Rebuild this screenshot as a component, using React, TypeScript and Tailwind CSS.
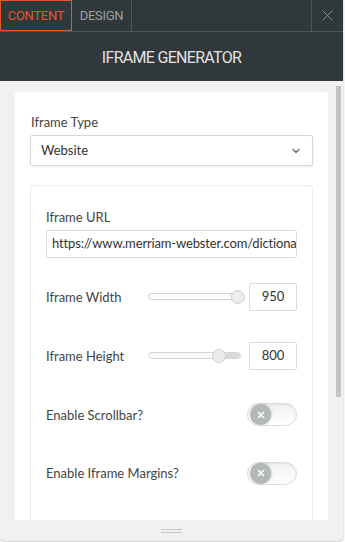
import { ChevronDown, X } from 'lucide-react';

function Slider({ pct, filled }: { pct: number; filled?: boolean }) {
  return (
    <div className="relative w-[93px] h-[14px] flex items-center">
      <div className="w-full h-[7px] rounded-full border border-[#d4d4d4] bg-[#fafafa] overflow-hidden">
        {filled && <div className="ml-auto h-full bg-[#d9d9d9]" style={{ width: `${100 - pct}%` }} />}
      </div>
      <div
        className="absolute top-0 w-[14px] h-[14px] -ml-[7px] rounded-full border border-[#cfcfcf] bg-[#ececec]"
        style={{ left: `${pct}%` }}
      />
    </div>
  );
}

function Toggle() {
  return (
    <div className="w-[50px] h-[23px] rounded-full border border-[#dcdcdc] bg-gradient-to-b from-[#f0f0f0] to-white flex items-center px-[2px] shadow-[inset_0_1px_2px_rgba(0,0,0,0.06)]">
      <div className="w-[21px] h-[21px] rounded-full bg-[#b3b8b8] flex items-center justify-center shadow-[1px_0_2px_rgba(0,0,0,0.15)]">
        <X size={10} strokeWidth={4} className="text-white" />
      </div>
    </div>
  );
}

function NumberBox({ value }: { value: string }) {
  return (
    <div className="w-[48px] h-[28px] border border-[#dcdcdc] rounded-[2px] flex items-center justify-center text-[13px] text-[#333]">
      {value}
    </div>
  );
}

export default function App() {
  const label = 'text-[13px] leading-[16px] text-[#444]';
  return (
    <div className="w-[345px] h-[542px] bg-white overflow-hidden font-['Lato','Open_Sans',sans-serif]">
      <div className="w-[343px] h-[541px] bg-[#f1f1f1] rounded-b-[5px] shadow-[0_1px_3px_rgba(0,0,0,0.25)] flex flex-col overflow-hidden">
        {/* Header */}
        <div className="h-[81px] bg-[#31383c] flex flex-col shrink-0">
          <div className="h-[32px] border-b border-[#4d5559] flex font-['Roboto',sans-serif] text-[13px]">
            <div className="w-[72px] border border-[#e1572c] text-[#e1572c] flex items-center justify-center tracking-[-0.3px]">
              CONTENT
            </div>
            <div className="w-[60px] border-r border-[#4d5559] text-[#9aa0a3] flex items-center justify-center tracking-[-0.3px]">
              DESIGN
            </div>
            <div className="flex-1" />
            <div className="w-[32px] border-l border-[#4d5559] flex items-center justify-center text-[#9aa0a3]">
              <X size={19} strokeWidth={1} />
            </div>
          </div>
          <div className="flex-1 flex items-center justify-center pt-[2px] text-[#e2e2e2] text-[16px] font-normal font-['Roboto',sans-serif] tracking-[-0.7px]">
            IFRAME GENERATOR
          </div>
        </div>

        {/* Body */}
        <div className="flex-1 flex min-h-0">
          <div className="flex-1 pl-[15px] pt-[11px] overflow-hidden">
            <div className="w-[313px] h-[440px] bg-white rounded-[3px] pt-[22px] px-[15px] flex flex-col">
              <div className={`${label} ml-[1px]`}>Iframe Type</div>
              <div className="mt-[5px] h-[31px] border border-[#d8d8d8] rounded-[2px] shadow-[0_1px_2px_rgba(0,0,0,0.08)] flex items-center justify-between pl-[10px] pr-[10px] text-[13px] text-[#333]">
                <span>Website</span>
                <ChevronDown size={12} strokeWidth={2.5} className="text-[#666]" />
              </div>

              <div className="mt-[19px] flex-1 border border-[#ececec] border-b-0 rounded-t-[3px] px-[15px] pt-[23px]">
                <div className={label}>Iframe URL</div>
                <div className="mt-[5px] h-[28px] border border-[#dcdcdc] rounded-[2px] flex items-center pl-[5px] text-[13px] tracking-[-0.15px] text-[#333] overflow-hidden whitespace-nowrap">
                  https://www.merriam-webster.com/dictionary/iframe
                </div>

                <div className="mt-[9px] h-[59px] flex items-center">
                  <div className={`${label} w-[102px]`}>Iframe Width</div>
                  <Slider pct={97} />
                  <div className="ml-auto">
                    <NumberBox value="950" />
                  </div>
                </div>
                <div className="h-[59px] flex items-center">
                  <div className={`${label} w-[102px]`}>Iframe Height</div>
                  <Slider pct={76} filled />
                  <div className="ml-auto">
                    <NumberBox value="800" />
                  </div>
                </div>
                <div className="h-[59px] flex items-center justify-between">
                  <div className={label}>Enable Scrollbar?</div>
                  <Toggle />
                </div>
                <div className="h-[58px] flex items-center justify-between">
                  <div className={label}>Enable Iframe Margins?</div>
                  <Toggle />
                </div>
              </div>
            </div>
          </div>
          {/* Scrollbar */}
          <div className="w-[15px] pt-[5px] pl-[8px] pr-[2px]">
            <div className="w-[5px] h-[311px] bg-[#c4c4c4]" />
          </div>
        </div>

        {/* Footer handle */}
        <div className="h-[21px] shrink-0 flex items-center justify-center">
          <div className="w-[21px] flex flex-col gap-[2px]">
            <div className="h-px bg-[#c8c8c8]" />
            <div className="h-px bg-[#c8c8c8]" />
          </div>
        </div>
      </div>
    </div>
  );
}
